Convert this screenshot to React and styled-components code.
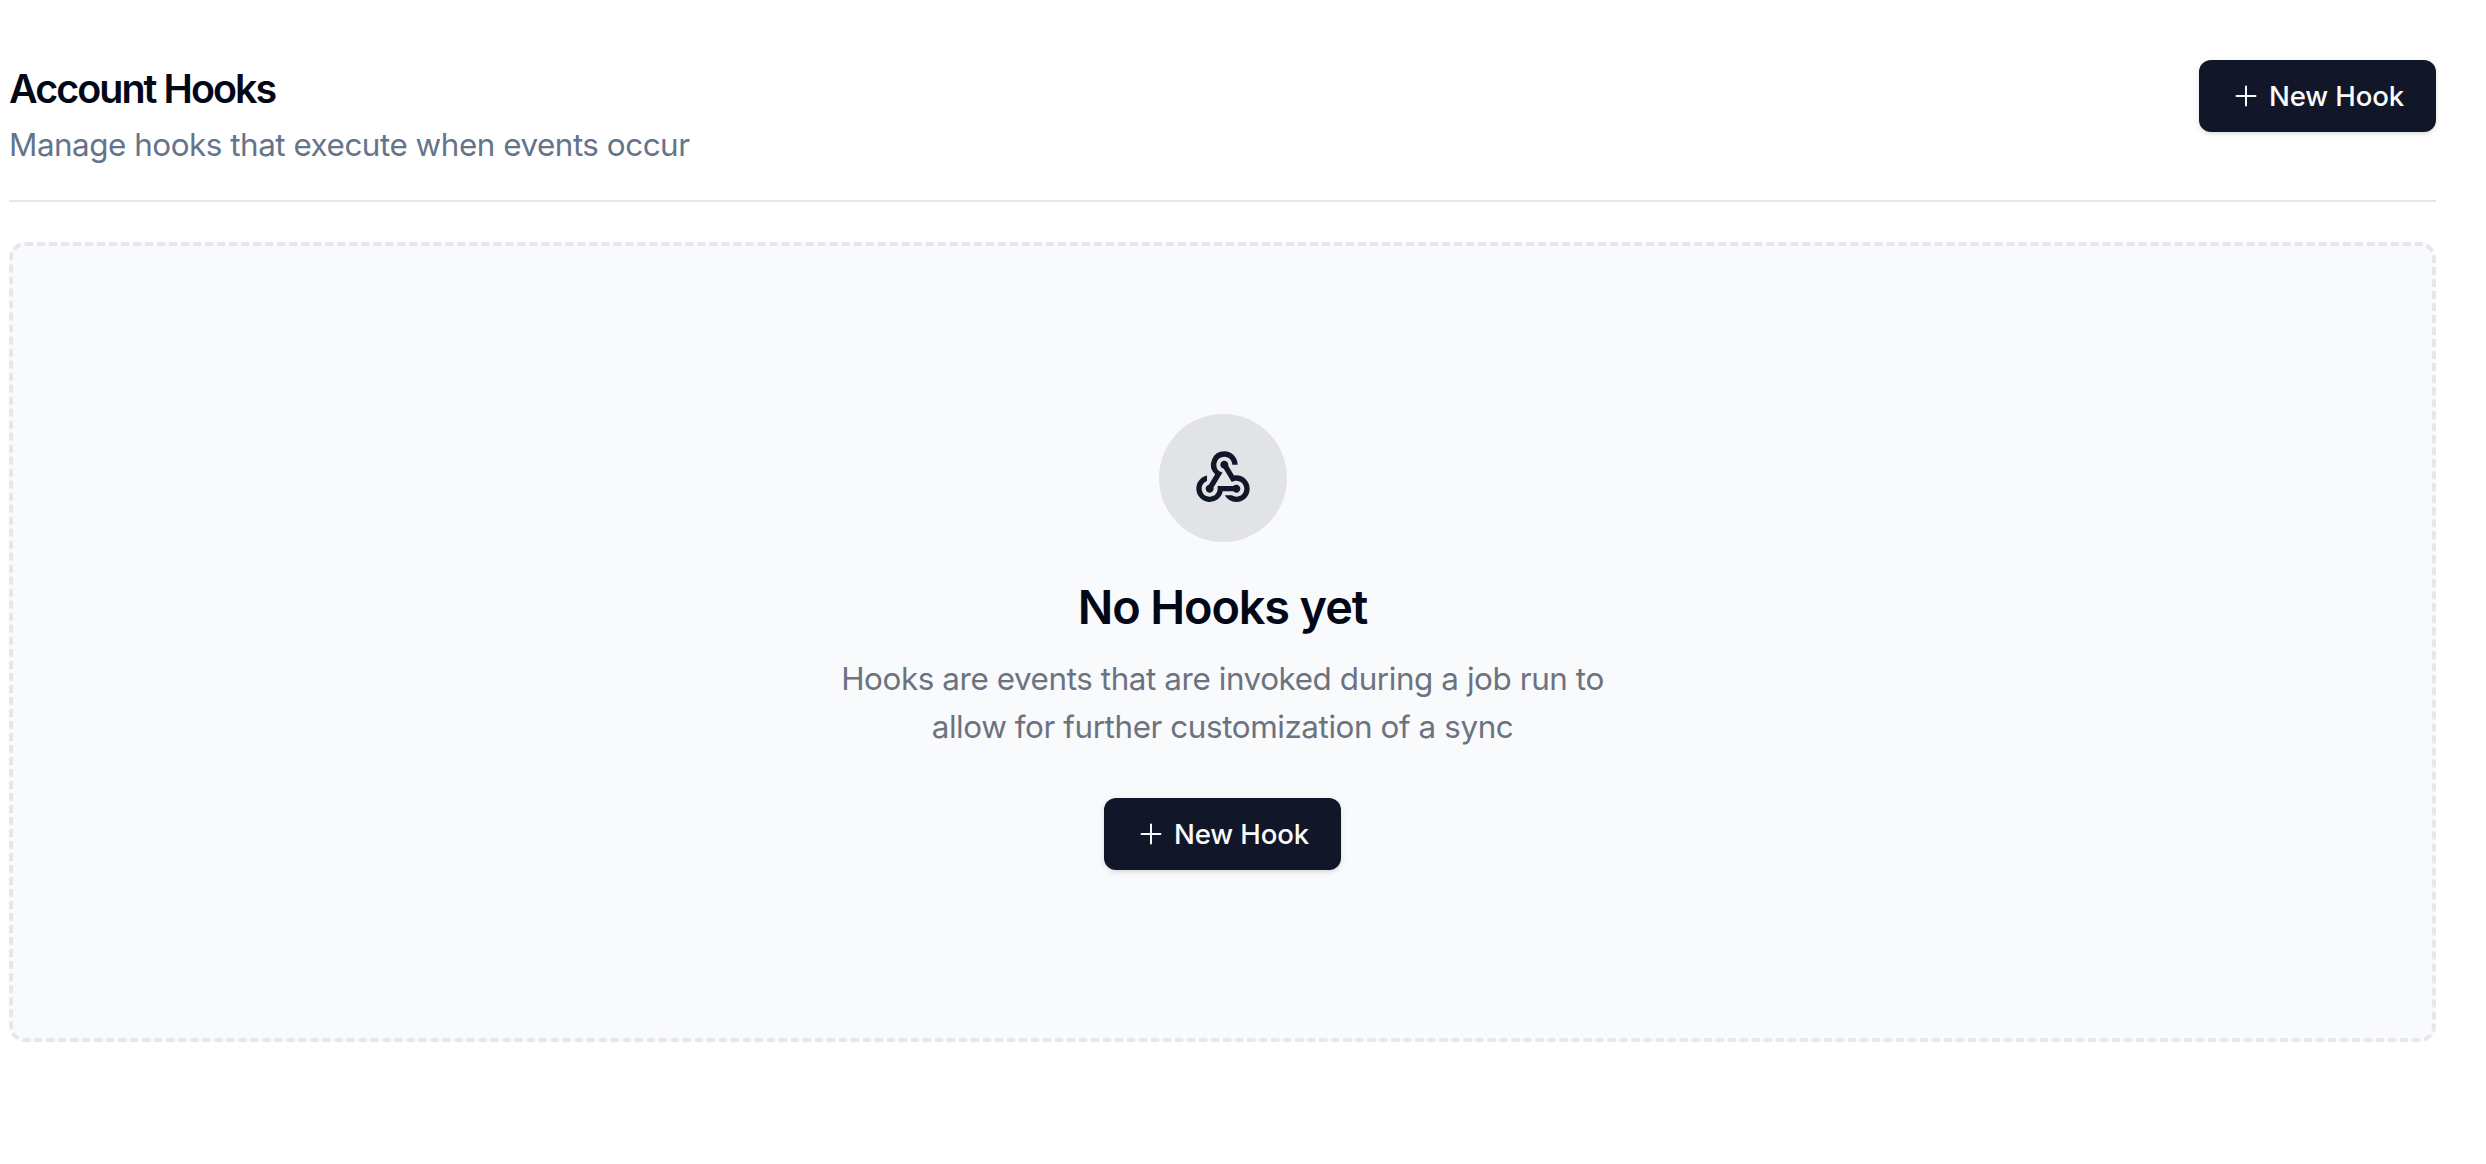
import React from 'react';
import styled, { createGlobalStyle } from 'styled-components';
import { MdWebhook } from 'react-icons/md';

const GlobalStyle = createGlobalStyle`
  *, *::before, *::after { box-sizing: border-box; }
  body {
    margin: 0;
    background: #ffffff;
    color: #020817;
    font-family: Inter, 'Liberation Sans', sans-serif;
    -webkit-font-smoothing: antialiased;
  }
  h1, h2, p { margin: 0; }
`;

const Page = styled.main`
  display: flex;
  flex-direction: column;
  gap: 40px;
  min-height: 1164px;
  padding: 60px 50px 0 9px;
`;

const Header = styled.header`
  display: flex;
  align-items: flex-start;
  justify-content: space-between;
  padding-bottom: 31px;
  border-bottom: 2px solid #e2e8f0;
`;

const HeaderText = styled.div`
  display: flex;
  flex-direction: column;
  gap: 3px;
`;

const Title = styled.h1`
  font-size: 39.4px;
  line-height: 58px;
  font-weight: 600;
  letter-spacing: -1.93px;
`;

const Subtitle = styled.p`
  font-size: 31.4px;
  line-height: 48px;
  letter-spacing: -0.47px;
  color: #64748b;
`;

const Button = styled.button`
  display: inline-flex;
  align-items: center;
  justify-content: center;
  gap: 8px;
  width: 237px;
  height: 72px;
  padding: 0;
  border: 0;
  border-radius: 12px;
  background: #111628;
  color: #f8fafc;
  font: 500 27.6px/40px Inter, 'Liberation Sans', sans-serif;
  letter-spacing: -0.12px;
  white-space: nowrap;
  box-shadow: 0 2px 6px rgba(0, 0, 0, 0.1), 0 2px 4px -2px rgba(0, 0, 0, 0.1);
  cursor: pointer;
`;

const EmptyState = styled.section`
  display: flex;
  flex-direction: column;
  align-items: center;
  justify-content: center;
  height: 800px;
  border: 4px dashed #e5e7eb;
  border-radius: 16px;
  background: #f9fafc;
  text-align: center;
`;

const IconCircle = styled.div`
  display: flex;
  align-items: center;
  justify-content: center;
  width: 128px;
  height: 128px;
  border-radius: 50%;
  background: #e2e3e6;
  color: #111628;
`;

const EmptyTitle = styled.h2`
  margin: 33px 0 16px;
  font-size: 46.8px;
  line-height: 64px;
  font-weight: 600;
  letter-spacing: -1.12px;
`;

const EmptyText = styled.p`
  width: 840px;
  margin-bottom: 47px;
  font-size: 31.4px;
  line-height: 48px;
  letter-spacing: -0.41px;
  color: #6b7280;
`;

function PlusIcon() {
  return (
    <svg width="30" height="30" viewBox="0 0 15 15" fill="none" aria-hidden="true">
      <path
        d="M8 2.75a.5.5 0 0 0-1 0V7H2.75a.5.5 0 0 0 0 1H7v4.25a.5.5 0 0 0 1 0V8h4.25a.5.5 0 0 0 0-1H8V2.75Z"
        fill="currentColor"
      />
    </svg>
  );
}

function NewHookButton() {
  return (
    <Button type="button">
      <PlusIcon />
      <span>New Hook</span>
    </Button>
  );
}

export default function App() {
  return (
    <>
      <GlobalStyle />
      <Page>
        <Header>
          <HeaderText>
            <Title>Account Hooks</Title>
            <Subtitle>Manage hooks that execute when events occur</Subtitle>
          </HeaderText>
          <NewHookButton />
        </Header>
        <EmptyState>
          <IconCircle>
            <MdWebhook size={64} />
          </IconCircle>
          <EmptyTitle>No Hooks yet</EmptyTitle>
          <EmptyText>
            Hooks are events that are invoked during a job run to
            <br />
            allow for further customization of a sync
          </EmptyText>
          <NewHookButton />
        </EmptyState>
      </Page>
    </>
  );
}
